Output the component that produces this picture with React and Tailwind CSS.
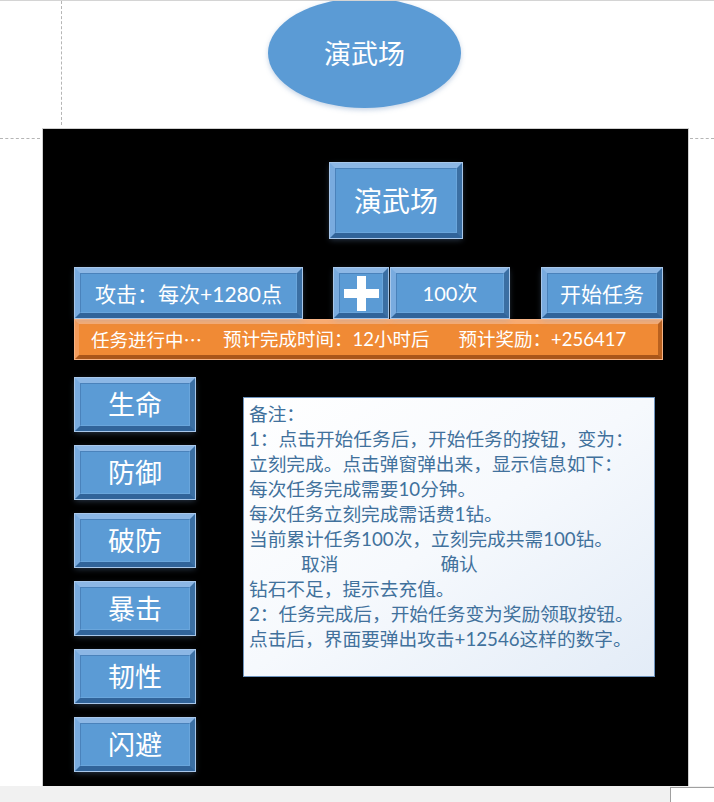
const FONT = "font-['Lato','Noto_Sans_CJK_SC',sans-serif]";

function BlueBtn({ className = '', children }) {
  return (
    <div
      className={`flex items-center justify-center bg-[#5b9bd5] text-white border-[5px] border-t-[#8cb7e5] border-l-[#79abdf] border-r-[#3b6fa3] border-b-[#31649a] outline outline-1 outline-[#a8c7ea] shadow-[0_2px_6px_rgba(120,160,210,0.35)] ${className}`}
    >
      <div className="w-full h-full flex items-center justify-center border border-t-[#4a82bb] border-l-[#4a82bb] border-r-[#6aa6dc] border-b-[#6aa6dc]">
        {children}
      </div>
    </div>
  );
}

function PlusIcon() {
  return (
    <svg width="35" height="35" viewBox="0 0 35 35">
      <rect x="13" y="0" width="9" height="35" fill="#fff" />
      <rect x="0" y="13" width="35" height="9" fill="#fff" />
    </svg>
  );
}

const stats = ['生命', '防御', '破防', '暴击', '韧性', '闪避'];

export default function App() {
  return (
    <div className={`relative w-[714px] h-[802px] bg-white overflow-hidden border-t border-[#d4d4d4] ${FONT}`}>
      {/* page margin marks */}
      <div className="absolute left-[61px] top-0 h-[124px] border-l border-dashed border-[#b5b5b5]" />
      <div className="absolute left-0 top-[137px] w-[40px] border-t border-dashed border-[#b5b5b5]" />
      <div className="absolute left-[690px] top-[137px] w-[24px] border-t border-dashed border-[#b5b5b5]" />

      <div className="h-[127px] flex items-start">
        <div className="ml-[268px] -mt-[3px] w-[193px] h-[110px] rounded-[50%] bg-[#5b9bd5] shadow-[0_2px_5px_rgba(90,130,180,0.35)] flex items-center justify-center">
          <span className="text-white text-[27px] leading-none">演武场</span>
        </div>
      </div>

      <div className="ml-[42px] w-[647px] h-[658px] bg-black border border-[#cfcfcf] border-b-0">
        <div className="pt-[34px] pl-[287px]">
          <BlueBtn className="w-[132px] h-[75px]">
            <span className="text-[28px] leading-none">演武场</span>
          </BlueBtn>
        </div>

        <div className="mt-[30px] ml-[32px] flex h-[50px]">
          <BlueBtn className="w-[227px] h-full">
            <span className="text-[21px] leading-none">攻击：每次+1280点</span>
          </BlueBtn>
          <BlueBtn className="ml-[32px] w-[54px] h-full">
            <PlusIcon />
          </BlueBtn>
          <BlueBtn className="ml-[3px] w-[118px] h-full">
            <span className="text-[20px] leading-none">100次</span>
          </BlueBtn>
          <BlueBtn className="ml-[33px] w-[120px] h-full">
            <span className="text-[21px] leading-none">开始任务</span>
          </BlueBtn>
        </div>

        <div className="mt-[2px] ml-[32px] w-[587px] h-[39px] bg-[#f08a35] border-[4px] border-t-[#f7ab72] border-l-[#f39b5a] border-r-[#b9611f] border-b-[#a9561a] outline outline-1 outline-[#f6b385] flex items-center pl-[12px] text-white text-[18.5px] leading-none">
          <span>任务进行中<span className="font-['Noto_Sans_CJK_SC',sans-serif]">…</span></span>
          <span className="ml-[21px]">预计完成时间：12小时后</span>
          <span className="ml-[29px]">预计奖励：+256417</span>
        </div>

        <div className="mt-[19px] ml-[32px] flex items-start">
          <div className="flex flex-col gap-[15px]">
            {stats.map((s) => (
              <BlueBtn key={s} className="w-[120px] h-[53px]">
                <span className="text-[27px] leading-none">{s}</span>
              </BlueBtn>
            ))}
          </div>

          <div className="ml-[48px] mt-[19px] w-[412px] h-[280px] bg-gradient-to-br from-white via-[#f6f9fd] to-[#e3ecf7] border border-[#6d93bd] pl-[5px] pt-[4px] text-[#41719c] text-[18.7px] leading-[25px]">
            <div>备注：</div>
            <div>1：点击开始任务后，开始任务的按钮，变为：</div>
            <div>立刻完成。点击弹窗弹出来，显示信息如下：</div>
            <div>每次任务完成需要10分钟。</div>
            <div>每次任务立刻完成需话费1钻。</div>
            <div>当前累计任务100次，立刻完成共需100钻。</div>
            <div className="flex">
              <span className="ml-[52px]">取消</span>
              <span className="ml-[102px]">确认</span>
            </div>
            <div>钻石不足，提示去充值。</div>
            <div>2：任务完成后，开始任务变为奖励领取按钮。</div>
            <div>点击后，界面要弹出攻击+12546这样的数字。</div>
          </div>
        </div>
      </div>

      <div className="h-[16px] bg-[#f1f1f1] flex justify-end">
        <div className="w-[44px] h-[15px] mt-[1px] bg-white border border-[#a0a0a0] border-r-0 border-b-0" />
      </div>
    </div>
  );
}
